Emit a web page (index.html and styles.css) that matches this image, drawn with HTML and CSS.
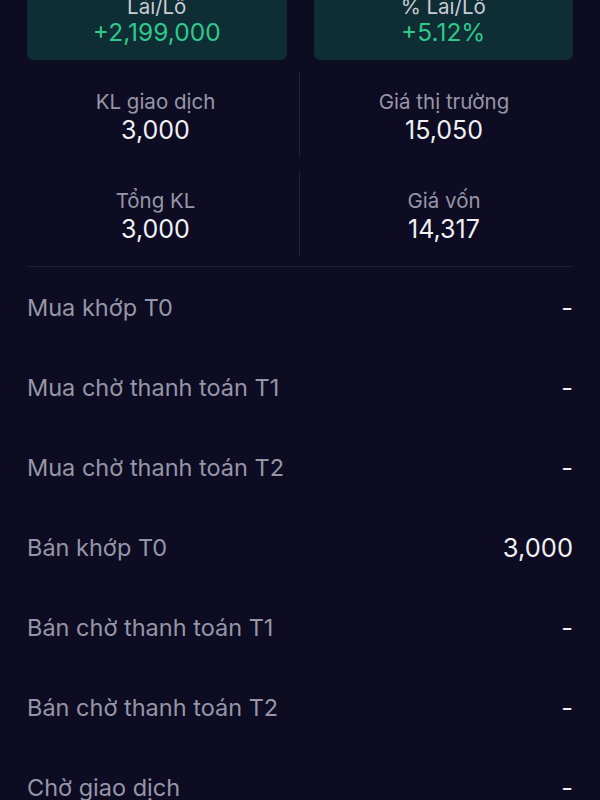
FILE: index.html
```html
<!DOCTYPE html>
<html lang="vi">

<head>
  <meta charset="UTF-8">
  <meta name="viewport" content="width=device-width, initial-scale=1.0">
  <title>Chi tiết danh mục</title>
  <link rel="stylesheet" href="styles.css">
</head>

<body>
  <div class="page">

    <div class="summary">
      <div class="card">
        <p class="card-label">Lãi/Lỗ</p>
        <p class="card-value up">+2,199,000</p>
      </div>
      <div class="card">
        <p class="card-label">% Lãi/Lỗ</p>
        <p class="card-value up">+5.12%</p>
      </div>
    </div>

    <div class="stats">
      <div class="stat">
        <p class="stat-label">KL giao dịch</p>
        <p class="stat-value">3,000</p>
      </div>
      <div class="stat">
        <p class="stat-label">Giá thị trường</p>
        <p class="stat-value">15,050</p>
      </div>
      <div class="stat">
        <p class="stat-label">Tổng KL</p>
        <p class="stat-value">3,000</p>
      </div>
      <div class="stat">
        <p class="stat-label">Giá vốn</p>
        <p class="stat-value">14,317</p>
      </div>
    </div>

    <ul class="detail-list">
      <li><span>Mua khớp T0</span><b>-</b></li>
      <li><span>Mua chờ thanh toán T1</span><b>-</b></li>
      <li><span>Mua chờ thanh toán T2</span><b>-</b></li>
      <li><span>Bán khớp T0</span><b>3,000</b></li>
      <li><span>Bán chờ thanh toán T1</span><b>-</b></li>
      <li><span>Bán chờ thanh toán T2</span><b>-</b></li>
      <li><span>Chờ giao dịch</span><b>-</b></li>
    </ul>

  </div>
</body>

</html>
```

FILE: styles.css
```css
* {
  box-sizing: border-box;
}

body {
  margin: 0;
  background-color: #0d0c22;
  font-family: Inter, "Noto Sans", sans-serif;
  overflow: hidden;
}

p {
  margin: 0;
}

.page {
  padding: 0 27px;
}

/* lãi lỗ */
.summary {
  display: grid;
  grid-template-columns: 1fr 1fr;
  gap: 27px;
  margin-top: -8px;
}

.card {
  background-color: #0e2d34;
  border-radius: 6px;
  padding: 4px 0 14px;
  text-align: center;
}

.card-label {
  font-size: 20.5px;
  line-height: 22px;
  color: #c9ccd3;
}

.card-value {
  font-size: 24.5px;
  line-height: 28px;
}

.up {
  color: #2fc98b;
}

/* thông tin */
.stats {
  display: grid;
  grid-template-columns: 1fr 1fr;
  row-gap: 15px;
  margin: 12px -15px 0;
  padding-bottom: 12px;
  position: relative;
}

.stats::after {
  content: '';
  position: absolute;
  left: 15px;
  right: 15px;
  bottom: 0;
  height: 1px;
  background-color: #1f1e35;
}

.stat {
  height: 84px;
  padding-top: 4px;
  display: flex;
  flex-direction: column;
  justify-content: center;
  align-items: center;
}

.stat:nth-child(odd) {
  border-right: 1px solid #25243c;
}

.stat-label {
  font-size: 20.5px;
  line-height: 28px;
  color: #9796a8;
}

.stat-value {
  font-size: 25px;
  line-height: 28px;
  color: #f0f0f5;
}

/* chi tiết */
.detail-list {
  list-style: none;
  margin: 0;
  padding: 0;
}

.detail-list li {
  height: 80px;
  display: flex;
  justify-content: space-between;
  align-items: center;
}

.detail-list span {
  font-size: 23.5px;
  color: #9796a8;
}

.detail-list b {
  font-weight: 400;
  font-size: 25.5px;
  color: #f0f0f5;
}
```
